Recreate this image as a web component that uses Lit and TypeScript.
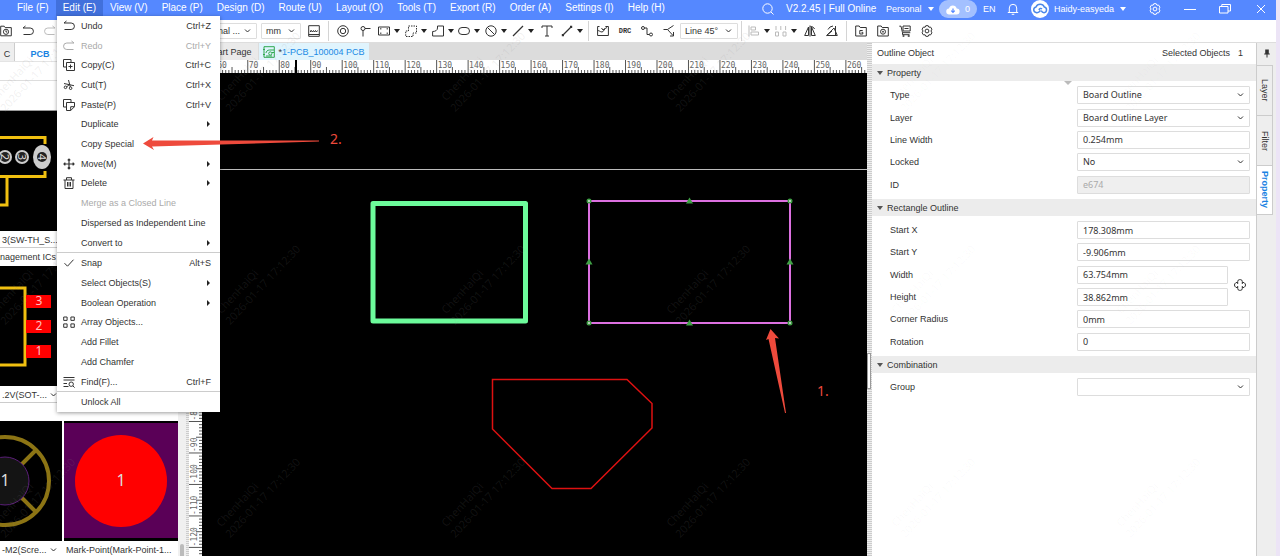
import { LitElement, html, svg, css, type TemplateResult } from "lit";
import { customElement, property, state } from "lit/decorators.js";
import { classMap } from "lit/directives/class-map.js";

// Glyphs are drawn on a 12 x 12 grid with one-unit strokes.
const ICONS: Record<string, TemplateResult> = {
  undo: svg`<path d="M3.500 1L1 3h7.200a3.200 3.200 0 0 1 0 6.500H1.500"/>`,
  redo: svg`<path d="M8.500 1L11 3H3.800a3.200 3.200 0 0 0 0 6.500h6.700"/>`,
  copy: svg`<path d="M3 8H.5V.5H8V3M3.5 3.5h8v8h-8zM7.500 5.500v4M5.500 7.500h4"/>`,
  cut: svg`<path d="M1 4.500l10 2.200M5.500 1l1.800 7M7 5L3.500 8"/><circle cx="2.500" cy="8.300" r="1.300"/><circle cx="7.600" cy="9.200" r="1.300"/>`,
  paste: svg`<path d="M3 8H.5V.5H8V3M3.500 3.500h8v4.200l-3.800 3.800H3.500zM11.500 7.700H7.700v3.800"/>`,
  move: svg`<path d="M6 1v10M1 6h10M4.700 2.300L6 1l1.300 1.300M4.700 9.700L6 11l1.300-1.300M2.300 4.700L1 6l1.300 1.300M9.700 4.700L11 6 9.700 7.300" stroke-width="1.200"/>`,
  trash: svg`<path d="M.5 3h11M3.500 3V.7h5V3M2 3v8.500h8V3M4.500 5v4.500M6 5v4.500M7.500 5v4.500"/>`,
  check: svg`<path d="M1.500 6.200l3 3 6-6.500"/>`,
  array: svg`<path d="M.7 1h3.400v3.400H.7zM7.900 1h3.400v3.400H7.900zM.7 7.900h3.400v3.400H.7zM7.900 7.900h3.400v3.400H7.900z"/>`,
  find: svg`<path d="M.5 1.500h11M.5 4h11M.5 7.500h3.500M.5 10.500h5M9.900 9.900l1.700 1.700"/><circle cx="8.200" cy="8.200" r="2.200"/>`,
  folderClock: svg`<path d="M.7 10.800V1.200h3.500l1 1.400h6.100v8.200z"/><circle cx="6" cy="6.800" r="2.600"/><path d="M6 5.300v1.700h1.300"/>`,
  wave: svg`<path d="M.7.700h10.600v10.600H.7z"/><path d="M.7 9.500h10.600M2.500 5.500v1.500l1-1.500 1 1.500 1-1.500 1 1.500 1-1.500 1 1.500 1-1.500" />`,
  ring: svg`<circle cx="6" cy="6" r="5.300"/><circle cx="6" cy="6" r="2.700"/>`,
  pin: svg`<circle cx="4" cy="3.500" r="2"/><path d="M6 3.500h5.500M4 5.500V11.500"/>`,
  rect: svg`<path d="M.5 2h11v8h-11z"/><path d="M2.300 3.700h1M8.700 3.700h1M2.300 8.300h1M8.700 8.300h1" stroke-width="1.500"/>`,
  dashed: svg`<path d="M3.500 1h8v7H8v3.500H.7V6h2.800z" stroke-dasharray="1.500 1"/>`,
  poly: svg`<path d="M5.500 1h6v10H.6V6.500c2.500 0 4.900-1 4.900-3.500z"/>`,
  oval: svg`<rect x=".5" y="2.500" width="11" height="7" rx="3.500"/>`,
  no: svg`<circle cx="6" cy="6" r="5.200"/><path d="M2.400 2.400l7.200 7.200"/>`,
  line: svg`<path d="M1 11L11 1" stroke-width="1.200"/>`,
  text: svg`<path d="M1 3V1h10v2M6 1v10M4 11h4"/>`,
  track: svg`<path d="M2 10l2.500-2.500 3-3L10 2" stroke-width="1.300"/><path d="M.8 9h2.200v2.200H.8zM9 .8h2.200V3H9z" fill="currentColor" stroke="none"/>`,
  importer: svg`<path d="M2.500 1.500H.6v9h10.800v-9h-3M.6 5.500c2 0 2.500 1.500 4.400 1.500 2 0 2-4 5-4.500M4.500 3l1.500 2 2-1.500"/>`,
  net: svg`<circle cx="2" cy="3" r="1.500"/><circle cx="10" cy="9.500" r="1.500"/><path d="M3.500 3H6v6.500h2.500"/>`,
  branch: svg`<path d="M.5 4.500h4l6-4M4.500 4.500l5.500 6M10.500 7v4H7"/>`,
  align: svg`<path d="M1 .5v11M3 2h4.500v3H3zM3 7h7.500v3H3z"/>`,
  distribute: svg`<path d="M1 1v4M5.800 1v4M10.600 1v4M.5 7h3v4h-3zM8 7h3v4H8z"/>`,
  flipH: svg`<path d="M4.500 2L.7 10.500h3.800zM6 .5v11M7.500 2l3.800 8.500H7.500zM6.500 1.500c2 0 3.500 1 4 2.500"/>`,
  flipV: svg`<path d="M9.500 1v9.500M.7 10.500h10.600L8 3zM.7 10.500L6 6M2 4.500L4 2l3-1"/>`,
  folderG: svg`<path d="M.7 11V1h3.500l1 1.500h6.100V11zM7.700 5.500H4.800v3.500h3V7.300H6.500"/>`,
  folderView: svg`<path d="M.7 11V1h3.500l1 1.500h6.100V11z"/><circle cx="6" cy="6.700" r="2.500"/><circle cx="6" cy="6.700" r=".6"/>`,
  cart: svg`<path d="M.3 1.200H2l1.500 6.500h7.800M4 1h7.200v5H4zM5.500 3.500h4M3.500 7.700v2h7"/><circle cx="4.500" cy="11" r=".7"/><circle cx="9.700" cy="11" r=".7"/>`,
  gear: svg`<path d="M4.800.7H7.200L7.900 2.200 9.600 2.100 10.900 4.200 10 6 10.900 7.800 9.600 9.900 7.900 9.800 7.200 11.300H4.800L4.100 9.800 2.400 9.900 1.100 7.800 2 6 1.100 4.200 2.400 2.100 4.100 2.200z" stroke-linejoin="round"/><circle cx="6" cy="6" r="1.900"/>`,
  search: svg`<circle cx="5.500" cy="5.500" r="4.700"/><path d="M9 9l2.500 2.500"/>`,
  bell: svg`<path d="M.8 9.500h10.400M2.300 9.500V5a3.700 3.700 0 0 1 7.400 0v4.500M4.700 11.300h2.600"/>`,
  min: svg`<path d="M0 6.500h12"/>`,
  restore: svg`<path d="M.5 3.500h8.500v6.500H.5zM2.800 3.500V1.500h8.700V8H9"/>`,
  close: svg`<path d="M2 2l8 8M10 2l-8 8"/>`,
  boardDoc: svg`<path d="M1 .7h10.300v10.600H1z"/><path d="M0 3.500h2M0 8.500h2M11 4H6.500C4.500 4 3 5.500 3 7M11 6.500H9"/><circle cx="7.300" cy="7.500" r="1.600"/><path d="M3 10h6"/>`,
  pinned: svg`<path d="M4.200 2.500h3.600v4h1v1H3.200v-1h1zM5.500 7.500h1v3h-1z" fill="currentColor" stroke="none"/>`,
  link: svg`<path d="M3.700 5V2.600a2 2 0 0 1 2-2h.6a2 2 0 0 1 2 2V5M3.700 7v2.400a2 2 0 0 0 2 2h.6a2 2 0 0 0 2-2V7M3.700 3.500H2L.6 5v2L2 8.500h1.700M8.300 3.500H10L11.400 5v2L10 8.500H8.300"/>`,
};

const icon = (name: string) => html`<svg class="icon" viewBox="0 0 12 12" aria-hidden="true">${ICONS[name]}</svg>`;

interface MenuEntry { label: string; icon?: string; keys?: string; sub?: boolean; off?: boolean; rule?: boolean }

const EDIT_MENU: MenuEntry[] = [
  { label: "Undo", icon: "undo", keys: "Ctrl+Z" },
  { label: "Redo", icon: "redo", keys: "Ctrl+Y", off: true },
  { label: "Copy(C)", icon: "copy", keys: "Ctrl+C" },
  { label: "Cut(T)", icon: "cut", keys: "Ctrl+X" },
  { label: "Paste(P)", icon: "paste", keys: "Ctrl+V" },
  { label: "Duplicate", sub: true },
  { label: "Copy Special" },
  { label: "Move(M)", icon: "move", sub: true },
  { label: "Delete", icon: "trash", sub: true },
  { label: "Merge as a Closed Line", off: true },
  { label: "Dispersed as Independent Line" },
  { label: "Convert to", sub: true },
  { label: "Snap", icon: "check", keys: "Alt+S", rule: true },
  { label: "Select Objects(S)", sub: true },
  { label: "Boolean Operation", sub: true },
  { label: "Array Objects...", icon: "array" },
  { label: "Add Fillet" },
  { label: "Add Chamfer" },
  { label: "Find(F)...", icon: "find", keys: "Ctrl+F" },
  { label: "Unlock All", rule: true },
];

const MENUS = ["File (F)", "Edit (E)", "View (V)", "Place (P)", "Design (D)", "Route (U)", "Layout (O)", "Tools (T)", "Export (R)", "Order (A)", "Settings (I)", "Help (H)"];

@customElement("edit-menu")
export class EditMenu extends LitElement {
  static styles = css`
    :host { display: block; }
    .menu {
      display: flex; flex-direction: column; height: 396px; width: 163px; margin: 0; padding: 0;
      list-style: none; background: #fff; box-shadow: 0 1px 4px rgba(0, 0, 0, 0.4);
    }
    .row { flex: 1; display: flex; min-height: 0; }
    .rule { border-top: 1px solid #ccc; }
    .item {
      flex: 1; display: grid; grid-template-columns: 18px 1fr auto; align-items: center; min-width: 0;
      padding: 0 9px 0 6px; border: 0; background: none; color: #333; text-align: left;
      font: 9px/12px "Liberation Sans", Arial, sans-serif; white-space: nowrap;
    }
    .item:disabled { color: #aaa; }
    .icon { width: 12px; height: 12px; display: block; fill: none; stroke: currentColor; stroke-width: 1; }
    .sub { width: 0; border: 3px solid transparent; border-left-color: #222; border-right: 0; margin-right: 1px; }
  `;
  render() {
    return html`<ul class="menu">
      ${EDIT_MENU.map((m) => html`<li class=${classMap({ row: true, rule: !!m.rule })}>
        <button class="item" ?disabled=${m.off}>
          <span>${m.icon ? icon(m.icon) : ""}</span><span>${m.label}</span>
          ${m.sub ? html`<span class="sub"></span>` : html`<span>${m.keys ?? ""}</span>`}
        </button></li>`)}
    </ul>`;
  }
}

interface Field { label: string; value: string; kind: "select" | "text"; off?: boolean; narrow?: boolean }
const f = (label: string, value: string, kind: Field["kind"] = "text", extra: Partial<Field> = {}): Field => ({ label, value, kind, ...extra });

const SECTIONS: { title: string; fields: Field[] }[] = [
  { title: "Property", fields: [
    f("Type", "Board Outline", "select"), f("Layer", "Board Outline Layer", "select"), f("Line Width", "0.254mm"),
    f("Locked", "No", "select"), f("ID", "e674", "text", { off: true }) ] },
  { title: "Rectangle Outline", fields: [
    f("Start X", "178.308mm"), f("Start Y", "-9.906mm"), f("Width", "63.754mm", "text", { narrow: true }),
    f("Height", "38.862mm", "text", { narrow: true }), f("Corner Radius", "0mm"), f("Rotation", "0") ] },
  { title: "Combination", fields: [f("Group", "", "select")] },
];

@customElement("property-panel")
export class PropertyPanel extends LitElement {
  static styles = css`
    :host { display: block; background: #fff; color: #333; font: 9px/12px "Liberation Sans", Arial, sans-serif; }
    .title { display: flex; justify-content: space-between; padding: 4px 13px 5px 5px; }
    .count { display: flex; gap: 8px; }
    .section { position: relative; margin: 0; }
    .head { display: flex; align-items: center; gap: 4px; height: 17px; margin: 0; padding-left: 5px; background: #ececec; font: inherit; }
    .tri { border: 3px solid transparent; border-top: 4px solid #555; border-bottom: 0; }
    .fields { display: grid; padding: 3px 6px 3px 18px; grid-template-columns: 187px 1fr; }
    .fields.n5 { grid-template-rows: repeat(5, 1fr); min-height: 112px; }
    .fields.n6 { grid-template-rows: repeat(6, 1fr); min-height: 134px; }
    .fields.n1 { min-height: 22px; }
    .fields label { align-self: center; }
    .box {
      align-self: center; box-sizing: border-box; width: 100%; min-width: 0; height: 18px; padding: 0 5px; margin: 0;
      border: 1px solid #ddd; border-radius: 1px; background: #fff; color: #333;
      font: 9px/14px "Noto Sans", "Open Sans", sans-serif;
    }
    .box:disabled { background: #efefef; color: #aaa; opacity: 1; }
    .narrow { width: auto; margin-right: 22px; }
    select.box {
      appearance: none;
      background: #fff url("data:image/svg+xml,%3Csvg xmlns='http://www.w3.org/2000/svg' width='7' height='6'%3E%3Cpath d='M1 1.5l2.5 2.500 2.500-2.500' fill='none' stroke='%23333'/%3E%3C/svg%3E") no-repeat right 5px center;
    }
    .link { position: absolute; right: 10px; top: 80px; width: 12px; height: 12px; padding: 0; border: 0; background: #fff; color: #333; }
    .icon { width: 12px; height: 12px; display: block; fill: none; stroke: currentColor; stroke-width: 1; }
    .notch { position: absolute; left: 50%; top: 17px; border: 4px solid transparent; border-top-color: #bbb; border-bottom: 0; }
  `;
  private field(x: Field) {
    const id = x.label.toLowerCase().replace(/ /g, "-");
    return html`<label for=${id}>${x.label}</label>
      ${x.kind === "select"
        ? html`<select class="box" id=${id}><option>${x.value}</option></select>`
        : html`<input class=${classMap({ box: true, narrow: !!x.narrow })} id=${id} .value=${x.value} ?disabled=${x.off} />`}`;
  }
  render() {
    return html`<div class="title"><span>Outline Object</span><span class="count"><span>Selected Objects</span><span>1</span></span></div>
      ${SECTIONS.map((s, i) => html`<section class="section">
        <h2 class="head"><span class="tri"></span>${s.title}</h2>
        ${i === 0 ? html`<span class="notch"></span>` : ""}
        <div class="fields n${s.fields.length}">${s.fields.map((x) => this.field(x))}</div>
        ${i === 1 ? html`<button class="link" aria-label="Keep ratio">${icon("link")}</button>` : ""}
      </section>`)}`;
  }
}

const STEP = 3.148;
const range = (a: number, b: number) => Array.from({ length: Math.max(0, b - a + 1) }, (_, i) => a + i);

@customElement("board-view")
export class BoardView extends LitElement {
  @property({ type: Number }) cursor = 106;
  @state() private size = { w: 680, h: 500 };
  private watcher = new ResizeObserver(([e]) => (this.size = { w: e.contentRect.width, h: e.contentRect.height }));

  static styles = css`
    :host { display: grid; grid-template: 13px minmax(0, 1fr) / 13px minmax(0, 1fr); min-height: 0; background: #fff; }
    .top { grid-column: 1 / 3; width: 100%; height: 13px; display: block; }
    .side { width: 13px; height: 100%; display: block; }
    .stage { width: 100%; height: 100%; display: block; background: #000; }
    .num { font: 8px "DejaVu Sans Mono", monospace; fill: #666; }
    .tick { stroke: #555; stroke-width: 1; }
    .green { fill: none; stroke: #6cfb9b; stroke-width: 5; stroke-linejoin: round; }
    .pink { fill: none; stroke: #dc70e0; stroke-width: 2; }
    .red { fill: none; stroke: #dd1111; stroke-width: 1.5; }
    .grip { fill: #3fa045; }
    .dot { fill: #ddd; }
  `;
  connectedCallback() {
    super.connectedCallback();
    this.watcher.observe(this);
  }
  disconnectedCallback() {
    this.watcher.disconnect();
    super.disconnectedCallback();
  }
  render() {
    // Both rulers share the scale of the stage: ten units every 31.48 px.
    const rx = (v: number) => 153.2 + (v - 100) * STEP;
    const ry = (v: number) => 348.5 + (-80 - v) * STEP;
    const right = Math.floor((this.size.w - 153.2) / STEP + 100);
    const low = Math.ceil(-80 - (this.size.h - 13 - 348.5) / STEP);
    const reach = (v: number) => (v % 10 === 0 ? 0 : v % 5 === 0 ? 7 : 10);
    return html`
      <svg class="top">${range(52, right).map((v) => svg`<line class="tick" x1=${rx(v)} x2=${rx(v)} y1=${reach(v)} y2="13"/>`)}
        ${range(6, Math.floor(right / 10)).map((v) => svg`<text class="num" x=${rx(v * 10) + 1} y="8">${v * 10}</text>`)}
        <rect x=${this.cursor} width="2" height="13" fill="#000"/></svg>
      <svg class="side">${range(low, 30).map((v) => svg`<line class="tick" y1=${ry(v)} y2=${ry(v)} x1=${reach(v)} x2="13"/>`)}
        ${range(Math.ceil(low / 10), 2).map((v) => svg`<text class="num" transform="translate(8 ${ry(v * 10) - 1}) rotate(-90)">${v * 10}</text>`)}</svg>
      <svg class="stage">
        <line x1="0" x2="100%" y1="96.500" y2="96.500" stroke="#bbb"/>
        <rect class="green" x="171" y="130.500" width="152.500" height="117.500"/>
        <rect class="pink" x="387" y="128" width="201" height="122"/>
        ${[[387, 128], [588, 128], [387, 250], [588, 250]].map(([x, y]) => svg`<circle class="grip" cx=${x} cy=${y} r="2.500"/><circle class="dot" cx=${x} cy=${y} r="1"/>`)}
        ${[[487.5, 128], [487.5, 250], [387, 189], [588, 189]].map(([x, y]) => svg`<path class="grip" d="M${x} ${y - 3.5}l3.500 6h-7z"/>`)}
        <path class="red" d="M290.500 306.500H425L450 330.500V355L389 415.500H350L290.500 356z"/>
      </svg>`;
  }
}

@customElement("app-root")
export class AppRoot extends LitElement {
  @state() private dock = "Property";

  static styles = css`
    :host { display: block; font: 9px/12px "Liberation Sans", Arial, sans-serif; color: #333; }
    .app { position: relative; display: grid; grid-template-rows: 20px 23px minmax(0, 1fr); height: 100vh; overflow: hidden; border-right: 4px solid #ece4f6; box-sizing: border-box; background: #fff; }
    .icon { width: 12px; height: 12px; display: block; flex: none; fill: none; stroke: currentColor; stroke-width: 1; }
    button { font: inherit; color: inherit; border: 0; background: none; padding: 0; margin: 0; }

    .bar { display: flex; justify-content: space-between; background: #5588ff; color: #fff; font-size: 10px; white-space: nowrap; }
    .menus { display: flex; padding-left: 10px; align-items: flex-start; }
    .top { height: 16px; padding: 0 7px; }
    .top.open { background: #4170dc; }
    .account { display: grid; grid-template-columns: 24px 100px 53px 44px 24px 24px 23px 95px 35px 35px 36px 21px; align-items: center; height: 18px; }
    .user { font-size: 9px; display: flex; gap: 6px; align-items: center; }
    .down { border: 3px solid transparent; border-top: 4px solid currentColor; border-bottom: 0; }
    .pill { width: 38px; height: 18px; border-radius: 9px; background: #a3c0ff; display: flex; align-items: center; justify-content: center; gap: 5px; font-size: 9px; }
    .cloud { width: 14px; height: 11px; }
    .face { width: 18px; height: 18px; }

    .tools { display: flex; align-items: center; background: #fff; border-bottom: 1px solid #ddd; box-sizing: border-box; overflow: hidden; }
    .quick { display: flex; width: 180px; flex: none; gap: 10px; }
    .tool { width: 22px; flex: none; display: flex; justify-content: center; align-items: center; gap: 4px; }
    .quick .tool { width: 12px; }
    .tool.wide { width: 27px; }
    .faint { color: #bbb; }
    .caret { border: 3px solid transparent; border-top: 4px solid #222; border-bottom: 0; }
    .faint .caret { border-top-color: #222; }
    .shapes { display: flex; width: 160px; flex: none; }
    .shapes .tool { flex: 1; width: auto; }
    .split { width: 1px; height: 20px; background: #d4d4d4; flex: none; margin: 0 3px; }
    .drc { font: bold 7px/12px "Liberation Mono", monospace; }
    .pick {
      appearance: none; box-sizing: border-box; height: 16px; border: 1px solid #ddd; border-radius: 1px; color: #333; margin: 0;
      font: inherit; padding: 0 0 0 4px; flex: none;
      background: #fff url("data:image/svg+xml,%3Csvg xmlns='http://www.w3.org/2000/svg' width='7' height='6'%3E%3Cpath d='M1 1.500l2.500 2.500 2.500-2.500' fill='none' stroke='%23333'/%3E%3C/svg%3E") no-repeat right 5px center;
    }
    .layer { width: 77px; text-align-last: right; padding-right: 16px; margin-right: 4px; }
    .unit { width: 40px; margin-right: 2px; }
    .angle { width: 58px; }

    .body { display: grid; grid-template-columns: 178px 11px minmax(0, 1fr) 5px 384px 20px; min-height: 0; }
    .library { min-height: 0; overflow: hidden; display: flex; flex-direction: column; background: #fff; }
    .libtabs { display: grid; grid-template-columns: 15px 50px 1fr; height: 18px; background: #fff; flex: none; border-bottom: 1px solid #e4e4e4; }
    .libtab { padding-top: 3px; }
    .libtab.rest { background: #eee; border-right: 1px solid #ccc; }
    .libtab.on { color: #1a82e2; font-weight: bold; }
    .strip { height: 18px; border-bottom: 1px solid #ddd; flex: none; }
    .strip.tall { height: 29px; border-bottom: 1px solid #999; }
    .shot { display: block; width: 100%; height: 120px; background: #000; flex: none; }
    .caption { box-sizing: border-box; height: 17px; line-height: 18px; padding: 0 2px; white-space: nowrap; flex: none; border-bottom: 1px solid #ccc; }
    .group { height: 18px; line-height: 18px; width: 56px; display: flex; justify-content: flex-end; white-space: nowrap; overflow: hidden; flex: none; }
    .named { display: grid; grid-template-columns: 46px 1fr; gap: 2px; align-items: center; }
    .chev { width: 7px; height: 6px; fill: none; stroke: #333; }
    .gap { height: 18px; flex: none; }
    .pair { display: grid; grid-template-columns: 62px 114px; gap: 0 2px; flex: none; }
    .pair .caption { border: 0; }
    .yel { fill: none; stroke: #f0c010; stroke-width: 3; }
    .pad { fill: #f00; }
    .padnum { font: 12px "Noto Sans", sans-serif; fill: #ffc0c0; text-anchor: middle; }
    .pinnum { font: 11px "Noto Sans", sans-serif; fill: #ddd; text-anchor: middle; }
    .big { font: 16px "Noto Sans", sans-serif; fill: #ddd; text-anchor: middle; }

    .scroll { display: grid; grid-template-columns: 8px 3px; background: #f0f0f0; }
    .thumb { align-self: end; width: 4px; height: 12px; margin-left: 2px; border-radius: 2px 2px 0 0; background: #bbb; }
    .grain { background: repeating-linear-gradient(#ccc 0 1px, #eee 1px 2px); }

    .centre { display: grid; grid-template-rows: 17px minmax(0, 1fr); min-height: 0; }
    .files { display: flex; background: #dcdcdc; white-space: nowrap; }
    .file { display: flex; align-items: center; gap: 4px; background: #eaeaea; padding: 0 6px 0 20px; border-right: 1px solid #ddd; }
    .file.on { background: #e0f4fd; color: #1a8ae5; padding: 0 4px; }
    .star { color: #333; }
    .doc { color: #2fa84f; }

    .dockbar { display: flex; flex-direction: column; background: #eee; padding-right: 3px; border-left: 1px solid #ccc; }
    .pinbox { height: 22px; display: flex; justify-content: center; padding-top: 4px; box-sizing: border-box; padding-left: 3px; }
    .dock { height: 50px; box-sizing: border-box; writing-mode: vertical-rl; border: 1px solid #ccc; border-left: 0; border-bottom: 0; text-align: center; line-height: 15px; background: #eee; }
    .dock.on { background: #fff; color: #1a82e2; font-weight: bold; border-bottom: 1px solid #ccc; }
    .edge { display: flex; align-items: center; background: repeating-linear-gradient(#ccc 0 1px, #eee 1px 2px); }
    .handle { width: 4px; height: 36px; margin-top: 143px; background: #fff; border: 1px solid #999; box-sizing: border-box; }

    .veil, .notes { position: absolute; left: 0; top: 0; width: 100%; height: 100%; pointer-events: none; }
    .mark { font: 11px/14px "Noto Sans", sans-serif; fill: rgba(145, 145, 145, 0.13); }
    .mark.soft { fill: rgba(145, 145, 145, 0.04); }
    .note { font: 14px "Noto Sans", sans-serif; fill: #ee4a3c; }
    .arrow { fill: #ee4a3c; }
    .drop { position: absolute; left: 57px; top: 16px; }
  `;

  private tool(name: string, wide = false, faint = false) {
    return html`<button class=${classMap({ tool: true, wide, faint })} aria-label=${name}>${icon(name)}${wide ? html`<span class="caret"></span>` : ""}</button>`;
  }

  private toolbar() {
    return html`<div class="tools">
      <div class="quick">${this.tool("folderClock")}${this.tool("undo")}${this.tool("redo", false, true)}</div>
      <select class="pick layer" aria-label="Layer"><option>Signal ...</option></select>
      <select class="pick unit" aria-label="Unit"><option>mm</option></select>
      ${this.tool("wave")}<span class="split"></span>
      ${this.tool("ring")}${this.tool("pin")}
      <div class="shapes">${["rect", "dashed", "poly", "oval", "no", "line"].map((n) => this.tool(n, true))}</div>
      ${this.tool("text")}${this.tool("track", true)}<span class="split"></span>
      ${this.tool("importer")}<button class="tool drc">DRC</button>${this.tool("net")}${this.tool("branch")}
      <select class="pick angle" aria-label="Routing corner"><option>Line 45°</option></select><span class="split"></span>
      ${this.tool("align", true, true)}${this.tool("distribute", true, true)}${this.tool("flipH")}${this.tool("flipV")}<span class="split"></span>
      ${["folderG", "folderView", "cart", "gear"].map((n) => this.tool(n))}
    </div>`;
  }

  private header() {
    return html`<header class="bar">
      <nav class="menus">${MENUS.map((m, i) => html`<button class=${classMap({ top: true, open: i === 1 })}>${m}</button>`)}</nav>
      <div class="account">
        <button aria-label="Search">${icon("search")}</button>
        <span>V2.2.45 | Full Online</span>
        <button class="user">Personal<span class="down"></span></button>
        <button class="pill"><svg class="cloud" viewBox="0 0 14 11"><path d="M3.500 10.500a3 3 0 0 1-.5-6 4 4 0 0 1 7.700 0 3 3 0 0 1-.2 6z" fill="#fff"/><path d="M7 4.500v4M5.200 6.700L7 8.500l1.800-1.800" fill="none" stroke="#5588ff" stroke-width="1.200"/></svg>0</button>
        <span class="user">EN</span>
        <button aria-label="Notifications">${icon("bell")}</button>
        <svg class="face" viewBox="0 0 18 18"><circle cx="9" cy="9" r="9" fill="#fff"/><path d="M9.500 10.500c-1.500 2-3 2.500-4.500 2a2.800 2.800 0 0 1 0-5.500 4.500 4.500 0 0 1 8.300 0 2.900 2.900 0 0 1-.3 5.700c-1.500 0-2.300-1-2.800-2M8 10c.3-1.500 2-2 3-1" fill="none" stroke="#4a86e8" stroke-width="1.500"/></svg>
        <button class="user">Haidy-easyeda<span class="down"></span></button>
        ${["gear", "min", "restore", "close"].map((n) => html`<button aria-label=${n}>${icon(n)}</button>`)}
      </div>
    </header>`;
  }

  private library() {
    const chev = html`<svg class="chev" viewBox="0 0 7 6"><path d="M1 1.500l2.500 2.500 2.500-2.500"/></svg>`;
    return html`<aside class="library">
      <div class="libtabs"><button class="libtab rest">C</button><button class="libtab on">PCB</button></div>
      <div class="strip"></div><div class="strip tall"></div>
      <svg class="shot">
        <path class="yel" d="M0 26.500H45V33M45 60V65.500H0M7 65V94H0"/>
        <ellipse cx="42" cy="46" rx="9" ry="12" fill="#ccc"/>
        ${[[42, "4"], [22, "3"], [5, "2"]].map(([x, n]) => svg`<circle cx=${x} cy="46" r="7" fill="#ccc"/><circle cx=${x} cy="46" r="5" fill="#222"/>
          <text class="pinnum" transform="translate(${Number(x) - 4} 46) rotate(90)">${n}</text>`)}
      </svg>
      <div class="caption">3(SW-TH_S...</div>
      <div class="group"><span>Power Management ICs</span></div>
      <svg class="shot">
        <rect class="yel" x="-40" y="22" width="65" height="77"/>
        ${["3", "2", "1"].map((n, i) => svg`<rect class="pad" x="26" y=${29 + i * 25} width="25" height="13"/><text class="padnum" x="39" y=${39 + i * 25}>${n}</text>`)}
      </svg>
      <div class="caption named"><span>.2V(SOT-...</span>${chev}</div>
      <div class="gap"></div>
      <div class="pair">
        <svg class="shot">
          <g stroke="#8c7414" stroke-width="4" fill="none"><circle cx="5" cy="60" r="44"/><path d="M21 44L36 29M21 76L36 91"/></g>
          <circle cx="5" cy="60" r="24" fill="#141414" stroke="#5a1e78"/><text class="big" x="5" y="65">1</text>
        </svg>
        <svg class="shot"><rect y="2" width="114" height="115" fill="#5a0057"/><circle cx="57" cy="60" r="46" fill="#f00"/><text class="big" x="57" y="65">1</text></svg>
        <div class="caption named"><span>-M2(Scre...</span>${chev}</div>
        <div class="caption">Mark-Point(Mark-Point-1...</div>
      </div>
    </aside>`;
  }

  render() {
    return html`<div class="app">
      ${this.header()}${this.toolbar()}
      <main class="body">
        ${this.library()}
        <div class="scroll"><span class="thumb"></span><span class="grain"></span></div>
        <div class="centre">
          <div class="files"><button class="file">Start Page</button>
            <button class="file on"><span class="doc">${icon("boardDoc")}</span><span><span class="star">*</span>1-PCB_100004 PCB</span></button></div>
          <board-view></board-view>
        </div>
        <div class="edge"><span class="handle"></span></div>
        <property-panel></property-panel>
        <div class="dockbar"><button class="pinbox" aria-label="Pin">${icon("pinned")}</button>
          ${["Layer", "Filter", "Property"].map((d) => html`<button class=${classMap({ dock: true, on: this.dock === d })} @click=${() => (this.dock = d)}>${d}</button>`)}</div>
      </main>
      <svg class="veil">${[103, 316, 529].map((y) => [-5, 220, 445, 670, 895, 1120].map((x) => {
        const mark = classMap({ mark: true, soft: x > 860 });
        return svg`<g transform="translate(${x} ${y}) rotate(-47)"><text class=${mark} x="2">ChenHaiQi</text><text class=${mark} y="14">2026-01-17 17:12:30</text></g>`;
      }))}</svg>
      <edit-menu class="drop"></edit-menu>
      <svg class="notes">
        <path class="arrow" d="M143 143.500L153.500 137 152 140.500 319 140.500V141.500L152 146.500 154 150z"/>
        <path class="arrow" d="M770.500 329L779 338.500 775 338 786 413H785L768.500 339 766 340z"/>
        <text class="note" x="330" y="144">2.</text><text class="note" x="817" y="396">1.</text>
      </svg>
    </div>`;
  }
}
